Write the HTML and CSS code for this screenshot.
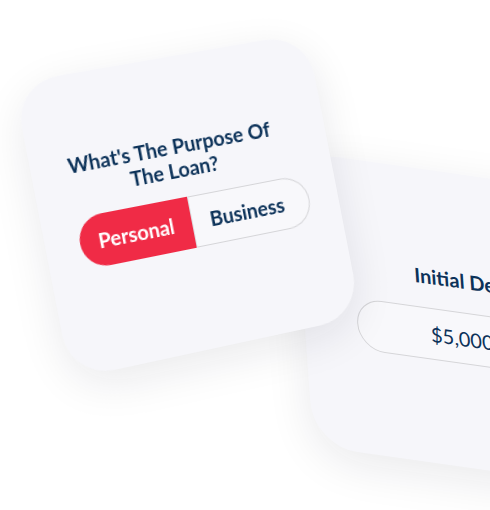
FILE: index.html
```html
<!DOCTYPE html>
<html lang="en">
<head>
<meta charset="utf-8">
<title>Loan cards</title>
<link rel="stylesheet" href="styles.css">
</head>
<body>
<div class="stage">
  <div class="card card-deposit">
    <h2 class="deposit-title">Initial Deposit</h2>
    <div class="amount-field">$5,000</div>
  </div>
  <div class="card card-purpose">
    <h2 class="purpose-title">What's The Purpose Of<br>The Loan?</h2>
    <div class="toggle">
      <span class="toggle-option is-active">Personal</span>
      <span class="toggle-option">Business</span>
    </div>
  </div>
</div>
</body>
</html>
```

FILE: styles.css
```css
html, body {
  margin: 0;
  padding: 0;
  background: #ffffff;
}

body {
  width: 490px;
  height: 510px;
  overflow: hidden;
  font-family: "Lato", "Liberation Sans", sans-serif;
}

.stage {
  position: relative;
  width: 490px;
  height: 510px;
  overflow: hidden;
}

.card {
  position: absolute;
  width: 300px;
  height: 295px;
  box-sizing: border-box;
  border-radius: 44px;
  background: #f6f6fa;
  box-shadow: 0 12px 44px rgba(20, 20, 40, 0.09);
  display: flex;
  flex-direction: column;
  align-items: center;
}

.card-purpose {
  left: 41px;
  top: 55px;
  padding-top: 77px;
  transform: perspective(1000px) rotate(-11deg) rotateY(8deg);
}

.card-deposit {
  left: 303px;
  top: 172px;
  padding-top: 95px;
  transform: skew(4deg, 8deg);
}

.purpose-title,
.deposit-title {
  margin: 0;
  font-size: 20px;
  line-height: 24px;
  font-weight: 700;
  color: #0c3259;
}

.purpose-title {
  text-align: center;
  padding-right: 20px;
}

.deposit-title {
  align-self: stretch;
  padding-left: 114px;
  white-space: nowrap;
}

.toggle {
  display: flex;
  width: 236px;
  height: 52px;
  margin-top: 16px;
  margin-left: 4px;
}

.toggle-option {
  flex: 1;
  display: flex;
  align-items: center;
  justify-content: center;
  font-size: 20px;
  font-weight: 700;
  color: #0c3259;
  background: #f8f8fb;
  border: 1.5px solid #d5d5d8;
  border-left: 1px solid #dcdcdf;
  border-radius: 0 26px 26px 0;
  padding-right: 8px;
}

.toggle-option.is-active {
  background: #f02b46;
  color: #ffffff;
  border: none;
  border-radius: 26px 0 0 26px;
  padding-right: 0;
}

.amount-field {
  align-self: flex-start;
  margin-left: 53px;
  width: 210px;
  height: 52px;
  margin-top: 20px;
  box-sizing: border-box;
  border: 1.5px solid #d5d5d8;
  border-radius: 26px;
  background: #f8f8fb;
  display: flex;
  align-items: center;
  justify-content: center;
  font-size: 20px;
  color: #0c3259;
}
```
